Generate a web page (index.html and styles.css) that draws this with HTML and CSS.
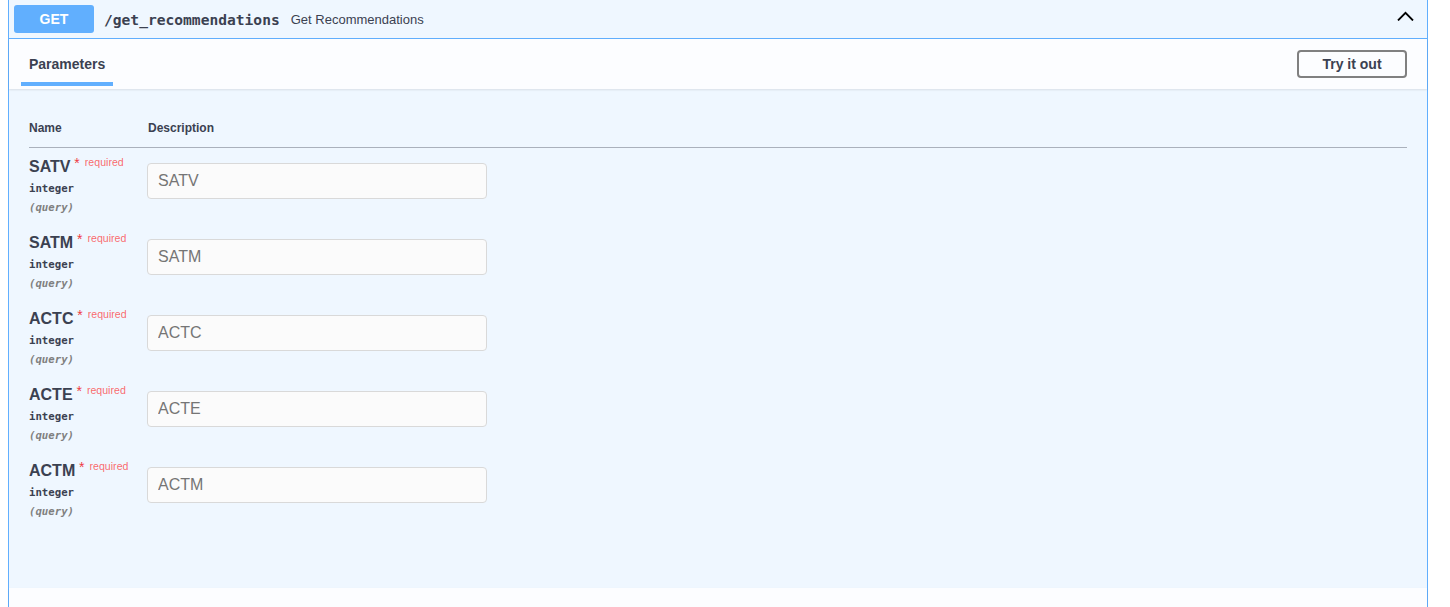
FILE: index.html
```html
<!DOCTYPE html>
<html lang="en">
<head>
<meta charset="utf-8">
<title>get_recommendations</title>
<link rel="stylesheet" href="styles.css">
</head>
<body>
<div class="opblock">
  <div class="summary">
    <span class="method">GET</span>
    <span class="path">/get_recommendations</span>
    <span class="summary-desc">Get Recommendations</span>
    <span class="arrow"><svg width="17" height="10" viewBox="0 0 17 10"><path d="M1 9.5 L8.5 1.8 L16 9.5" fill="none" stroke="#000" stroke-width="1.8"/></svg></span>
  </div>
  <div class="section-header">
    <div class="tab">Parameters</div>
    <button class="try">Try it out</button>
  </div>
  <div class="params">
    <div class="thead"><div>Name</div><div class="th-desc">Description</div></div>
    <div class="rows">
      <div class="row">
        <div class="name-col"><div class="pname">SATV<span class="star">&nbsp;*</span><span class="req">required</span></div><div class="ptype">integer</div><div class="pin">(query)</div></div>
        <div class="desc-col"><input class="field" type="text" placeholder="SATV"></div>
      </div>
      <div class="row">
        <div class="name-col"><div class="pname">SATM<span class="star">&nbsp;*</span><span class="req">required</span></div><div class="ptype">integer</div><div class="pin">(query)</div></div>
        <div class="desc-col"><input class="field" type="text" placeholder="SATM"></div>
      </div>
      <div class="row">
        <div class="name-col"><div class="pname">ACTC<span class="star">&nbsp;*</span><span class="req">required</span></div><div class="ptype">integer</div><div class="pin">(query)</div></div>
        <div class="desc-col"><input class="field" type="text" placeholder="ACTC"></div>
      </div>
      <div class="row">
        <div class="name-col"><div class="pname">ACTE<span class="star">&nbsp;*</span><span class="req">required</span></div><div class="ptype">integer</div><div class="pin">(query)</div></div>
        <div class="desc-col"><input class="field" type="text" placeholder="ACTE"></div>
      </div>
      <div class="row">
        <div class="name-col"><div class="pname">ACTM<span class="star">&nbsp;*</span><span class="req">required</span></div><div class="ptype">integer</div><div class="pin">(query)</div></div>
        <div class="desc-col"><input class="field" type="text" placeholder="ACTM"></div>
      </div>
    </div>
  </div>
  <div class="section-header resp"></div>
</div>
</body>
</html>
```

FILE: styles.css
```css
html, body {
  margin: 0;
  padding: 0;
  overflow: hidden;
  height: 607px;
  background: #ffffff;
}
body {
  font-family: "Liberation Sans", Arial, sans-serif;
  color: #3b4151;
}
.opblock {
  margin-left: 8px;
  width: 1420px;
  box-sizing: border-box;
  border: 1px solid #61affe;
  border-top: none;
  background: #eff7ff;
}
.summary {
  height: 38px;
  box-sizing: content-box;
  padding: 0 5px;
  display: flex;
  align-items: center;
  border-bottom: 1px solid #61affe;
}
.method {
  width: 80px;
  height: 28px;
  border-radius: 3px;
  background: #61affe;
  color: #fff;
  font-weight: 700;
  font-size: 14px;
  display: flex;
  align-items: center;
  justify-content: center;
}
.path {
  font-family: "DejaVu Sans Mono", monospace;
  font-weight: 700;
  font-size: 14.6px;
  padding: 0 11px 0 10px;
  color: #3b4151;
}
.summary-desc {
  font-size: 13px;
  color: #3b4151;
}
.arrow {
  margin-left: auto;
  margin-right: 8px;
  align-self: flex-start;
  margin-top: 11px;
  display: flex;
}
.section-header {
  height: 50px;
  display: flex;
  align-items: center;
  padding: 0 20px 0 12px;
  background: #fcfdff;
  box-shadow: 0 1px 2px rgba(0, 0, 0, 0.1);
  position: relative;
}
.tab {
  align-self: stretch;
  display: flex;
  align-items: center;
  padding: 0 8px;
  font-size: 14px;
  font-weight: 700;
  position: relative;
}
.tab::after {
  content: "";
  position: absolute;
  left: 0;
  right: 0;
  bottom: 3px;
  height: 4px;
  background: #61affe;
}
.try {
  margin-left: auto;
  width: 110px;
  height: 28px;
  border: 2px solid #808080;
  border-radius: 4px;
  background: transparent;
  font-family: "Liberation Sans", Arial, sans-serif;
  font-size: 14px;
  font-weight: 700;
  color: #3b4151;
  padding: 0;
}
.params {
  padding: 31px 20px 52px 20px;
}
.thead {
  display: grid;
  grid-template-columns: 118px 1fr;
  font-size: 12px;
  font-weight: 700;
  line-height: 16px;
  padding-bottom: 11px;
  border-bottom: 1px solid #aab1bc;
}
.th-desc {
  padding-left: 1px;
}
.rows {
  padding-top: 8px;
}
.row {
  display: grid;
  grid-template-columns: 118px 1fr;
  height: 76px;
}
.name-col {
  padding-top: 1px;
}
.pname {
  font-size: 16px;
  font-weight: 700;
  line-height: 20px;
  white-space: nowrap;
}
.star {
  color: #ee3a44;
  font-weight: 400;
  font-size: 14px;
  position: relative;
  top: -4px;
}
.req {
  font-size: 10.6px;
  font-weight: 400;
  color: rgba(255, 0, 0, 0.6);
  position: relative;
  top: -6px;
  padding-left: 5px;
}
.ptype {
  margin-top: 2px;
  font-family: "DejaVu Sans Mono", monospace;
  font-weight: 700;
  font-size: 10.7px;
  line-height: 18px;
}
.pin {
  font-family: "DejaVu Sans Mono", monospace;
  font-weight: 700;
  font-style: italic;
  font-size: 10.7px;
  line-height: 19px;
  color: #808080;
}
.field {
  display: block;
  margin-top: 7px;
  width: 340px;
  height: 36px;
  box-sizing: border-box;
  border: 1px solid #d9d9d9;
  border-radius: 4px;
  background: #fbfbfb;
  padding: 0 10px;
  font-family: "Liberation Sans", Arial, sans-serif;
  font-size: 16px;
  color: #3b4151;
  outline: none;
}
.field::placeholder {
  color: #757575;
}
.resp {
  height: 19px;
}
```
